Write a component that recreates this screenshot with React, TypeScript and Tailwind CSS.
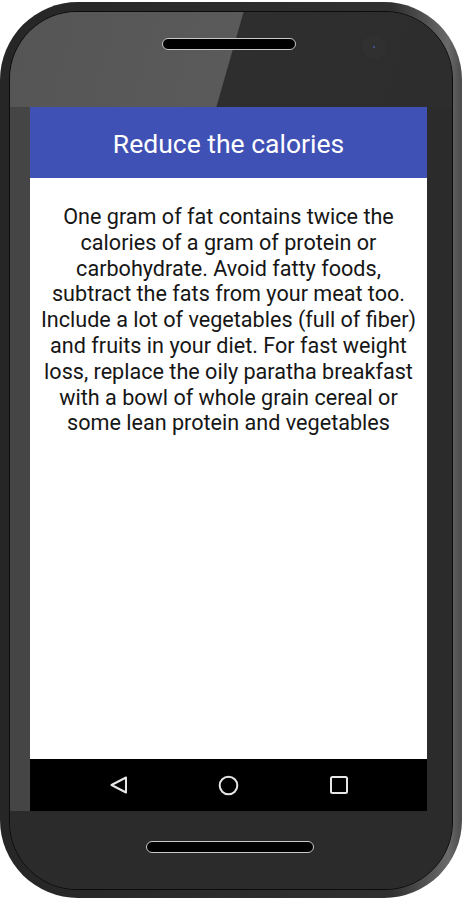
const lines = [
  "One gram of fat contains twice the",
  "calories of a gram of protein or",
  "carbohydrate. Avoid fatty foods,",
  "subtract the fats from your meat too.",
  "Include a lot of vegetables (full of fiber)",
  "and fruits in your diet. For fast weight",
  "loss, replace the oily paratha breakfast",
  "with a bowl of whole grain cereal or",
  "some lean protein and vegetables",
];

function NavBar() {
  return (
    <div className="flex h-[52px] items-center justify-center bg-black">
      <div className="flex w-[110px] justify-center">
        <svg width="20" height="20" viewBox="0 0 20 20" fill="none">
          <path d="M17 2.5 L2.5 10 L17 17.5 Z" stroke="#e6e6e6" strokeWidth="2" strokeLinejoin="round" />
        </svg>
      </div>
      <div className="flex w-[110px] justify-center">
        <svg width="21" height="21" viewBox="0 0 21 21" fill="none">
          <circle cx="10.5" cy="10.5" r="8.8" stroke="#e6e6e6" strokeWidth="2" />
        </svg>
      </div>
      <div className="flex w-[110px] justify-center">
        <svg width="20" height="20" viewBox="0 0 20 20" fill="none">
          <rect x="2" y="2" width="16" height="16" rx="1.5" stroke="#e6e6e6" strokeWidth="2" />
        </svg>
      </div>
    </div>
  );
}

function Screen() {
  return (
    <div className="flex w-[397px] flex-col bg-white">
      <div className="flex h-[71px] items-center justify-center bg-[#3f51b5] pt-[3px]">
        <h1 className="text-[26.5px] font-normal text-white [font-family:Roboto,sans-serif]">
          Reduce the calories
        </h1>
      </div>
      <div className="flex-1 pt-[26px] text-center text-[21.6px] leading-[25.8px] text-[#161616] [font-family:Roboto,sans-serif]">
        {lines.map((l) => (
          <p key={l} className="whitespace-nowrap">
            {l}
          </p>
        ))}
      </div>
      <NavBar />
    </div>
  );
}

export default function App() {
  return (
    <div className="h-[900px] w-[462px] bg-white pt-[2px]">
      <div className="h-[896px] w-[462px] rounded-[78px] bg-[linear-gradient(90deg,#262626_0,#303030_85%,#6a6a6a_97%,#4a4a4a_100%)] p-[9px] pb-[8px]">
        <div className="flex h-full w-full flex-col overflow-hidden rounded-[68px] border-[1.5px] border-[#0c0c0c] bg-[#2c2c2c]">
          {/* top bezel with glare */}
          <div className="relative flex h-[95px] shrink-0 items-start justify-center bg-[linear-gradient(106deg,#555_0,#5a5a5a_224px,#2e2e2e_225px,#2d2d2d_100%)] pt-[26px]">
            <div className="mr-[4px] h-[12px] w-[134px] rounded-full border-[1.5px] border-[#c8c8c8] bg-black" />
            <div className="absolute left-[352px] top-[23px] flex h-[24px] w-[24px] items-center justify-center rounded-full bg-[#303030]">
              <div className="h-[2px] w-[2px] rounded-full bg-[#4a5aa8]" />
            </div>
          </div>
          {/* middle */}
          <div className="flex h-[704px] shrink-0">
            <div className="w-[20px] bg-[#454545]" />
            <Screen />
            <div className="flex-1 bg-[#2b2b2b]" />
          </div>
          {/* bottom bezel */}
          <div className="flex flex-1 items-start justify-center bg-[#2b2b2b] pt-[30px]">
            <div className="mr-[3px] h-[12px] w-[168px] rounded-full border-[1.5px] border-[#c8c8c8] bg-black" />
          </div>
        </div>
      </div>
    </div>
  );
}
